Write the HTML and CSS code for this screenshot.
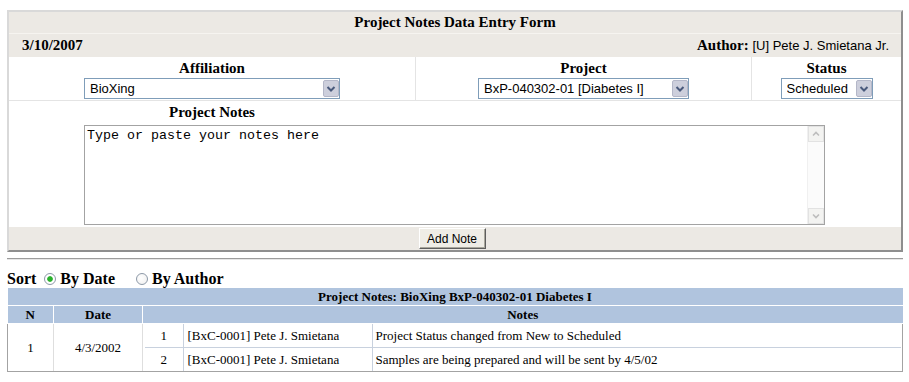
FILE: index.html
```html
<!DOCTYPE html>
<html lang="en">
<head>
    <meta charset="UTF-8">
    <title>Project Notes Data Entry Form</title>
    <link rel="stylesheet" href="styles.css">
</head>
<body>
    <form class="entry-form">
        <div class="form-title">Project Notes Data Entry Form</div>
        <div class="form-meta">
            <span class="meta-date">3/10/2007</span>
            <span class="meta-author"><b>Author:</b> <span class="author-name">[U] Pete J. Smietana Jr.</span></span>
        </div>

        <div class="form-body">
            <div class="field-row">
                <div class="field">
                    <label class="field-label">Affiliation</label>
                    <span class="combo combo-affiliation">
                        <select><option>BioXing</option></select>
                        <span class="combo-btn"><svg width="16" height="17" viewBox="0 0 16 17"><rect x="0.5" y="0.5" width="15" height="16" rx="1.5" fill="#cdcfdc" stroke="#b4b7c8"/><polyline points="4.5,7 8,10.5 11.5,7" fill="none" stroke="#4a5a7c" stroke-width="2"/></svg></span>
                    </span>
                </div>
                <div class="field">
                    <label class="field-label">Project</label>
                    <span class="combo combo-project">
                        <select><option>BxP-040302-01 [Diabetes I]</option></select>
                        <span class="combo-btn"><svg width="16" height="17" viewBox="0 0 16 17"><rect x="0.5" y="0.5" width="15" height="16" rx="1.5" fill="#cdcfdc" stroke="#b4b7c8"/><polyline points="4.5,7 8,10.5 11.5,7" fill="none" stroke="#4a5a7c" stroke-width="2"/></svg></span>
                    </span>
                </div>
                <div class="field">
                    <label class="field-label">Status</label>
                    <span class="combo combo-status">
                        <select><option>Scheduled</option></select>
                        <span class="combo-btn"><svg width="16" height="17" viewBox="0 0 16 17"><rect x="0.5" y="0.5" width="15" height="16" rx="1.5" fill="#cdcfdc" stroke="#b4b7c8"/><polyline points="4.5,7 8,10.5 11.5,7" fill="none" stroke="#4a5a7c" stroke-width="2"/></svg></span>
                    </span>
                </div>
            </div>

            <div class="notes-row">
                <label class="notes-label">Project Notes</label>
                <div class="notes-box">
                    <textarea>Type or paste your notes here</textarea>
                    <!-- disabled scrollbar drawn over the textarea -->
                    <span class="fake-scroll">
                        <span class="scroll-arrow"><svg width="14" height="14" viewBox="0 0 14 14"><polyline points="4,8.5 7,5.5 10,8.5" fill="none" stroke="#bdbdbd" stroke-width="1.6"/></svg></span>
                        <span class="scroll-arrow"><svg width="14" height="14" viewBox="0 0 14 14"><polyline points="4,5.5 7,8.5 10,5.5" fill="none" stroke="#bdbdbd" stroke-width="1.6"/></svg></span>
                    </span>
                </div>
            </div>
        </div>

        <div class="form-actions">
            <button type="button">Add Note</button>
        </div>
    </form>

    <hr>

    <div class="sort-line">
        <span>Sort</span>
        <label class="sort-opt sort-first"><input type="radio" name="sort" checked><span>By Date</span></label>
        <label class="sort-opt sort-second"><input type="radio" name="sort"><span>By Author</span></label>
    </div>

    <table class="notes-table">
        <colgroup>
            <col class="col-n">
            <col class="col-date">
            <col>
        </colgroup>
        <tr>
            <th colspan="3">Project Notes: BioXing BxP-040302-01 Diabetes I</th>
        </tr>
        <tr>
            <th>N</th>
            <th>Date</th>
            <th>Notes</th>
        </tr>
        <tr class="data-row">
            <td class="cell-n">1</td>
            <td class="cell-date">4/3/2002</td>
            <td class="cell-notes">
                <table class="entry-list">
                    <colgroup>
                        <col class="col-entry">
                        <col class="col-author">
                        <col>
                    </colgroup>
                    <tr>
                        <td class="entry-no">1</td>
                        <td class="entry-author">[BxC-0001] Pete J. Smietana</td>
                        <td class="entry-text">Project Status changed from New to Scheduled</td>
                    </tr>
                    <tr>
                        <td class="entry-no">2</td>
                        <td class="entry-author">[BxC-0001] Pete J. Smietana</td>
                        <td class="entry-text">Samples are being prepared and will be sent by 4/5/02</td>
                    </tr>
                </table>
            </td>
        </tr>
    </table>
</body>
</html>
```

FILE: styles.css
```css
body {
    margin: 0;
    padding: 10px 6px 0 7px;
    font-family: "Liberation Serif", "Times New Roman", serif;
    color: #000;
    background-color: #fff;
}

/* ---- entry form ---- */

.entry-form {
    border: 2px solid;
    border-color: #d9d9d9 #8e8e8e #8e8e8e #d9d9d9;
    background-color: #ece9e4;
}

.form-title {
    height: 21px;
    line-height: 21px;
    text-align: center;
    font-size: 15px;
    font-weight: bold;
    border-bottom: 1px solid #f6f4f0;
}

.form-meta {
    display: flex;
    justify-content: space-between;
    align-items: baseline;
    height: 23px;
    line-height: 23px;
    padding: 0 12px 0 13px;
    font-size: 15px;
}

.meta-date {
    font-weight: bold;
}

.author-name {
    font-family: "Liberation Sans", Arial, sans-serif;
    font-size: 13px;
}

.form-body {
    background-color: #fff;
}

.field-row {
    display: grid;
    grid-template-columns: 406px 336px 1fr;
    border-bottom: 1px solid #e4e4e4;
}

.field {
    display: flex;
    flex-direction: column;
    align-items: center;
    padding: 2px 0 1px;
}

.field + .field {
    border-left: 1px solid #e4e4e4;
}

.field-label,
.notes-label {
    display: block;
    font-size: 15px;
    font-weight: bold;
    line-height: 18px;
}

.field-label {
    margin-bottom: 1px;
}

.combo {
    position: relative;
    display: block;
    height: 21px;
}

.combo select {
    -webkit-appearance: none;
    appearance: none;
    box-sizing: border-box;
    display: block;
    width: 100%;
    height: 21px;
    margin: 0;
    padding: 0 0 0 5px;
    border: 1px solid #7f9db9;
    border-radius: 0;
    background-color: #fff;
    color: #000;
    font-family: "Liberation Sans", Arial, sans-serif;
    font-size: 13px;
}

.combo-btn {
    position: absolute;
    top: 2px;
    right: 1px;
    width: 16px;
    height: 17px;
    line-height: 0;
}

.combo-affiliation { width: 256px; }
.combo-project { width: 211px; }
.combo-status { width: 92px; }

.notes-row {
    padding: 2px 0;
}

.notes-label {
    width: 406px;
    text-align: center;
}

.notes-box {
    position: relative;
    width: 741px;
    height: 100px;
    margin: 4px 0 0 75px;
}

.notes-box textarea {
    box-sizing: border-box;
    display: block;
    width: 100%;
    height: 100%;
    margin: 0;
    padding: 2px 20px 2px 2px;
    border: 1px solid #a3a3a3;
    resize: none;
    font-family: "Liberation Mono", "Courier New", monospace;
    font-size: 13.33px;
    color: #000;
}

.fake-scroll {
    position: absolute;
    top: 1px;
    right: 1px;
    bottom: 1px;
    width: 16px;
    display: flex;
    flex-direction: column;
    justify-content: space-between;
    background-color: #fbfbfb;
    border-left: 1px solid #f0f0f0;
}

.scroll-arrow {
    box-sizing: border-box;
    width: 16px;
    height: 16px;
    padding: 0;
    border: 1px solid #e2e2e2;
    background-color: #f3f3f1;
    line-height: 0;
}

.form-actions {
    box-sizing: border-box;
    height: 23px;
    padding-top: 1px;
    text-align: center;
}

.form-actions button {
    width: 67px;
    height: 21px;
    margin: 0 6px 0 0;
    padding: 0;
    border: 1px solid;
    border-color: #fff #5e5e5e #5e5e5e #fff;
    box-shadow: inset -1px -1px 0 #a9a79c;
    background-color: #efede6;
    color: #000;
    font-family: "Liberation Sans", Arial, sans-serif;
    font-size: 12px;
}

hr {
    height: 0;
    margin: 6px 0 0;
    border: 0;
    border-top: 1px solid #9c9c9c;
    border-bottom: 1px solid #e6e6e6;
}

/* ---- sort line ---- */

.sort-line {
    display: flex;
    align-items: center;
    height: 18px;
    padding-top: 10px;
    font-size: 16px;
    font-weight: bold;
    line-height: 18px;
}

.sort-opt {
    display: flex;
    align-items: center;
}

.sort-first { margin-left: 8px; }
.sort-second { margin-left: 21px; }

.sort-opt input {
    -webkit-appearance: none;
    appearance: none;
    box-sizing: border-box;
    width: 12px;
    height: 12px;
    margin: 0 4px 0 0;
    border: 1px solid #8d99a8;
    border-radius: 50%;
    background: radial-gradient(circle at 40% 40%, #fff 0, #eeeeee 100%);
}

.sort-opt input:checked {
    background: radial-gradient(circle, #29b12c 0, #29b12c 2.4px, #fff 3.2px);
}

/* ---- notes table ---- */

.notes-table {
    width: 896px;
    table-layout: fixed;
    border-collapse: collapse;
    font-size: 13px;
}

.col-n { width: 46px; }
.col-date { width: 89px; }

.notes-table th {
    height: 17px;
    padding: 0;
    line-height: 16px;
    background-color: #b0c4de;
    border-bottom: 1px solid #fff;
    font-weight: bold;
}

.notes-table th + th {
    border-left: 1px solid #fff;
}

.data-row > td {
    padding: 0;
    text-align: center;
    vertical-align: middle;
    border-bottom: 1px solid #a3a3a3;
}

.cell-n {
    border-left: 1px solid #a3a3a3;
}

.cell-date,
.cell-notes {
    border-left: 1px solid #dedede;
}

.data-row > .cell-notes {
    padding: 0 1px 0 2px;
    border-right: 1px solid #a3a3a3;
}

.entry-list {
    width: 100%;
    table-layout: fixed;
    border-collapse: collapse;
    font-size: 13px;
}

.col-entry { width: 38px; }
.col-author { width: 189px; }

.entry-list td {
    height: 23px;
    padding: 0 0 0 4px;
    text-align: left;
}

.entry-list tr + tr td {
    border-top: 1px solid #c8d1de;
}

.entry-list .entry-no {
    padding: 0;
    text-align: center;
}

.entry-list .entry-author,
.entry-list .entry-text {
    border-left: 1px solid #c8d1de;
}

.entry-list .entry-text {
    padding-left: 3px;
}
```
